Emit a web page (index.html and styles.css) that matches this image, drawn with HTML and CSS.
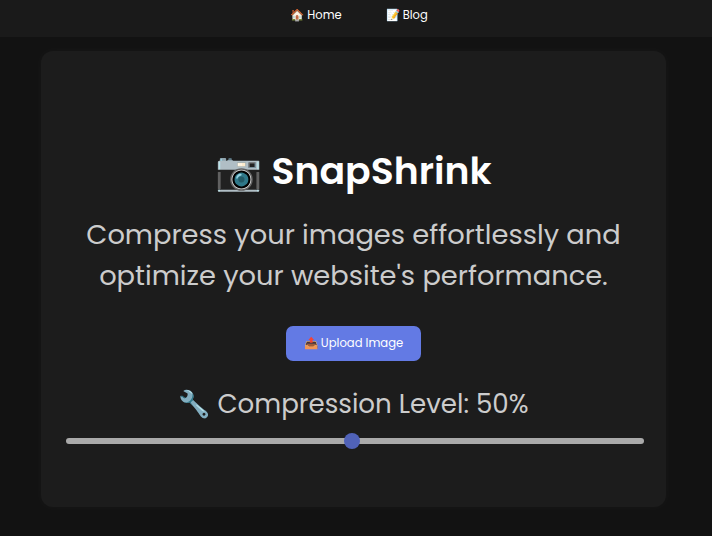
FILE: index.html
```html
<!DOCTYPE html>
<html lang="en">
<head>
<meta charset="utf-8">
<title>SnapShrink</title>
<link rel="stylesheet" href="styles.css">
</head>
<body>
<nav class="nav">
  <a class="nav-link" href="#">🏠 Home</a>
  <a class="nav-link" href="#">📝 Blog</a>
</nav>
<main class="card">
  <h1 class="title">📷 SnapShrink</h1>
  <p class="lead">Compress your images effortlessly and optimize your website's performance.</p>
  <button class="upload" type="button">📤 Upload Image</button>
  <label class="level" for="level">🔧 Compression Level: 50%</label>
  <input class="slider" id="level" type="range" min="1" max="100" value="50">
</main>
</body>
</html>
```
FILE: styles.css
```css
* { box-sizing: border-box; }
html, body { height: 100%; }
body {
  margin: 0;
  background: #121212;
  color: #fff;
  font-family: "Poppins", "Inter", "Noto Sans", sans-serif;
  overflow: hidden;
}
.nav {
  height: 37px;
  background: #1a1a1a;
  display: flex;
  justify-content: center;
  align-items: center;
  gap: 44px;
  padding: 0 0 6px 6px;
}
.nav-link {
  color: #fff;
  text-decoration: none;
  font-size: 11.5px;
}
.card {
  width: 625px;
  height: 456px;
  margin: 14px 0 0 41px;
  padding: 98px 25px 0;
  background: #1c1c1c;
  border-radius: 12px;
  box-shadow: 0 0 10px rgba(255,255,255,.03);
  display: flex;
  flex-direction: column;
  align-items: center;
  text-align: center;
}
.title {
  margin: 0;
  font-size: 37.8px;
  line-height: 44px;
  font-weight: 600;
}
.lead {
  margin: 21px 0 0;
  width: 575px;
  font-size: 27.3px;
  line-height: 41px;
  color: #ccc;
}
.upload {
  margin-top: 30px;
  width: 135px;
  height: 35px;
  border: 0;
  border-radius: 7px;
  background: #637ae4;
  color: #fff;
  font: 11.6px "Poppins", "Inter", sans-serif;
}
.level {
  margin-top: 25px;
  font-size: 26.1px;
  line-height: 36px;
  color: #ccc;
}
.slider {
  appearance: none;
  -webkit-appearance: none;
  width: 578px;
  height: 6px;
  margin: 16px 0 0;
  background: #aaa;
  border-radius: 3px;
  align-self: flex-start;
}
.slider::-webkit-slider-thumb {
  -webkit-appearance: none;
  width: 16px;
  height: 16px;
  border-radius: 50%;
  background: #5062b8;
}
```
